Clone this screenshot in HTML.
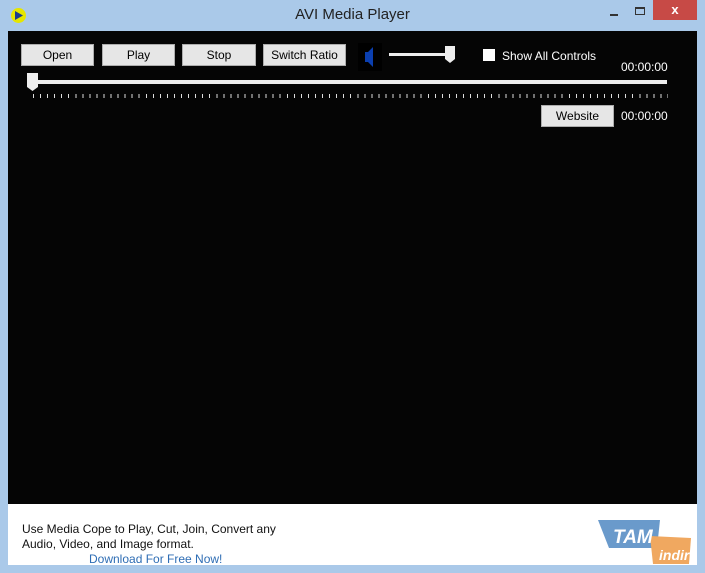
<!DOCTYPE html>
<html><head><style>
*{margin:0;padding:0;box-sizing:border-box}
body{width:705px;height:573px;background:#aac9e9;position:relative;overflow:hidden;font-family:"Liberation Sans",sans-serif}
.abs{position:absolute}
.btn{position:absolute;background:#e6e6e6;border:1px solid #adadad;font-size:12px;color:#000;text-align:center;line-height:20px;height:22px}
.t{color:#fff;font-size:12px}
</style></head><body>
<div class="abs" style="left:11px;top:8px;width:15px;height:15px;border-radius:50%;background:#e6e600"></div>
<svg class="abs" style="left:14px;top:10px" width="10" height="11"><polygon points="1,1 9,5.5 1,10" fill="#1a3b8f"/></svg>
<div class="abs" style="left:0;top:6px;width:705px;text-align:center;font-size:15px;color:#222">AVI Media Player</div>
<div class="abs" style="left:610px;top:14px;width:8px;height:2px;background:#333"></div>
<div class="abs" style="left:635px;top:7px;width:10px;height:8px;border:1px solid #333;border-top-width:2px"></div>
<div class="abs" style="left:653px;top:0;width:44px;height:20px;background:#c74a46;color:#fff;font-size:13px;text-align:center;line-height:20px;font-weight:bold">x</div>
<div class="abs" style="left:8px;top:31px;width:689px;height:473px;background:#050505"></div>
<div class="abs" style="left:8px;top:504px;width:689px;height:61px;background:#fff"></div>
<div class="btn" style="left:21px;top:44px;width:73px">Open</div>
<div class="btn" style="left:102px;top:44px;width:73px">Play</div>
<div class="btn" style="left:182px;top:44px;width:74px">Stop</div>
<div class="btn" style="left:263px;top:44px;width:83px">Switch Ratio</div>
<svg class="abs" style="left:358px;top:43px" width="24" height="28"><rect width="24" height="28" fill="#000"/><polygon points="7,9 10,9 15,4 15,24 10,19 7,19" fill="#0b3fb0"/></svg>
<div class="abs" style="left:389px;top:53px;width:62px;height:3px;background:#eee"></div>
<svg class="abs" style="left:445px;top:46px" width="11" height="18"><polygon points="0,0 10,0 10,13 5,17 0,13" fill="#eee"/></svg>
<div class="abs" style="left:483px;top:49px;width:12px;height:12px;background:#fff"></div>
<div class="abs t" style="left:502px;top:49px">Show All Controls</div>
<div class="abs t" style="left:621px;top:60px">00:00:00</div>
<div class="abs" style="left:28px;top:80px;width:639px;height:4px;background:#eee"></div>
<svg class="abs" style="left:27px;top:73px" width="12" height="19"><polygon points="0,0 11,0 11,14 5.5,18 0,14" fill="#eee"/></svg>
<div class="abs" style="left:33px;top:94px;width:635px;height:4px;background:repeating-linear-gradient(90deg,#ddd 0 1px,transparent 1px 7.05px)"></div>
<div class="btn" style="left:541px;top:105px;width:73px">Website</div>
<div class="abs t" style="left:621px;top:109px">00:00:00</div>
<div class="abs" style="left:22px;top:522px;font-size:12px;line-height:15px;color:#111">Use Media Cope to Play, Cut, Join, Convert any<br>Audio, Video, and Image format.</div>
<div class="abs" style="left:89px;top:552px;font-size:12px;color:#2e6db4">Download For Free Now!</div>
<svg class="abs" style="left:595px;top:518px" width="100" height="47"><polygon points="3,2 65,2 62,30 14,30" fill="#6a9acb"/><polygon points="55,18 96,20 94,46 58,46" fill="#f0a860"/><text x="18" y="25" font-family="Liberation Sans" font-style="italic" font-weight="bold" font-size="19" fill="#fff">TAM</text><text x="64" y="42" font-family="Liberation Sans" font-style="italic" font-weight="bold" font-size="14" fill="#fff">indir</text></svg>
</body></html>
